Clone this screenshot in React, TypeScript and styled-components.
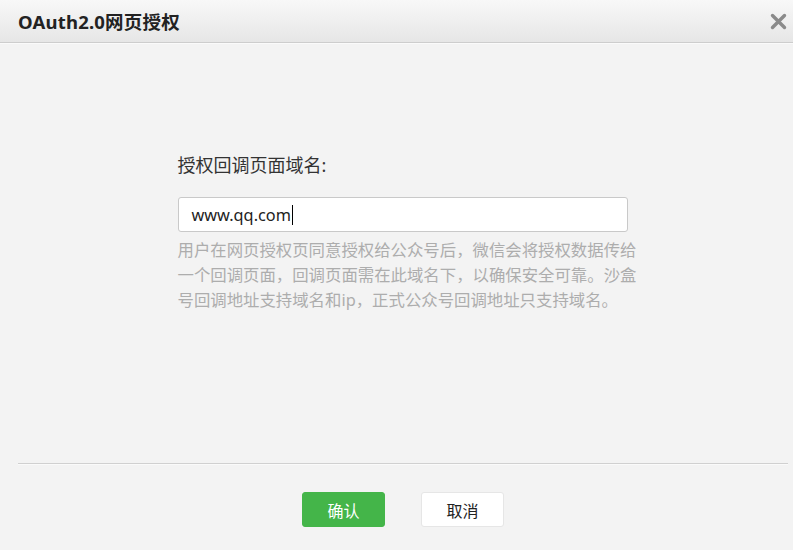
import styled, { createGlobalStyle } from "styled-components";

const GlobalStyle = createGlobalStyle`
  html, body {
    margin: 0;
    padding: 0;
    background: #f3f3f3;
  }
  body {
    font-family: "Noto Sans", "Noto Sans CJK SC", sans-serif;
    color: #333;
  }
`;

export default function App() {
  return (
    <>
      <GlobalStyle />
      <Dialog>
        <Header>
          <Title>OAuth2.0网页授权</Title>
          <Close aria-label="关闭">
            <svg width="17" height="17" viewBox="0 0 17 17">
              <path
                d="M2.5 2.5 L14.5 14.5 M14.5 2.5 L2.5 14.5"
                stroke="#8a8a8a"
                strokeWidth="3.4"
                strokeLinecap="round"
              />
            </svg>
          </Close>
        </Header>
        <Body>
          <Form>
            <Label>授权回调页面域名:</Label>
            <Field>
              www.qq.com
              <Caret />
            </Field>
            <Hint>
              用户在网页授权页同意授权给公众号后，微信会将授权数据传给
              <br />
              一个回调页面，回调页面需在此域名下，以确保安全可靠。沙盒
              <br />
              号回调地址支持域名和ip，正式公众号回调地址只支持域名。
            </Hint>
          </Form>
        </Body>
        <Footer>
          <Button $primary>确认</Button>
          <Button>取消</Button>
        </Footer>
      </Dialog>
    </>
  );
}

const Dialog = styled.div`
  width: 793px;
  height: 550px;
  display: flex;
  flex-direction: column;
  background: #f3f3f3;
  overflow: hidden;
`;

const Header = styled.div`
  height: 42px;
  flex-shrink: 0;
  display: flex;
  align-items: center;
  justify-content: space-between;
  padding: 0 6px 0 18px;
  background: linear-gradient(#f8f8f8, #e6e6e6);
  border-bottom: 1px solid #cdcdcd;
  box-shadow: 0 1px 0 #fafafa;
`;

const Title = styled.h3`
  margin: 0;
  font-size: 18.5px;
  font-weight: bold;
  color: #222;
  letter-spacing: 0.2px;
`;

const Close = styled.button`
  border: 0;
  background: transparent;
  padding: 0;
  width: 17px;
  height: 17px;
  margin-top: 1px;
  display: flex;
  cursor: pointer;
`;

const Body = styled.div`
  height: 420px;
  flex-shrink: 0;
  display: flex;
  justify-content: center;
`;

const Form = styled.div`
  width: 450px;
  padding: 111px 0 0 12px;
  display: flex;
  flex-direction: column;
`;

const Label = styled.div`
  font-size: 18px;
  line-height: 22px;
  color: #333;
  margin-bottom: 21px;
`;

const Field = styled.div`
  box-sizing: border-box;
  width: 450px;
  height: 35px;
  padding: 0 13px;
  display: flex;
  align-items: center;
  background: #fff;
  border: 1px solid #c9c9c9;
  border-radius: 3px;
  font-size: 16.3px;
  color: #222;
`;

const Caret = styled.span`
  display: inline-block;
  width: 1px;
  height: 20px;
  background: #000;
  margin-left: 1px;
`;

const Hint = styled.p`
  margin: 5px 0 0;
  width: 470px;
  font-size: 16.4px;
  line-height: 25px;
  color: #adadad;
  white-space: nowrap;
`;

const Footer = styled.div`
  margin: 0 5px 0 18px;
  border-top: 1px solid #d0d0d0;
  box-shadow: inset 0 1px 0 #fafafa;
  padding-top: 28px;
  display: flex;
  justify-content: center;
  gap: 36px;
`;

const Button = styled.button<{ $primary?: boolean }>`
  width: 83px;
  height: 35px;
  border-radius: 3px;
  font-family: inherit;
  font-size: 16px;
  cursor: pointer;
  border: 1px solid ${(p) => (p.$primary ? "#44b549" : "#e6e6e6")};
  background: ${(p) => (p.$primary ? "#44b549" : "#fff")};
  color: ${(p) => (p.$primary ? "#fff" : "#222")};
`;
